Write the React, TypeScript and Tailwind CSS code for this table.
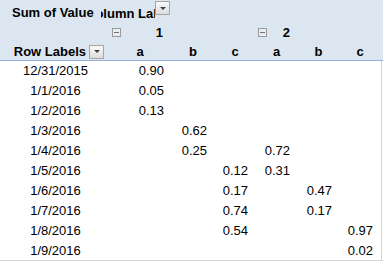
import React from 'react'

// pivot table: 1 / 2 grouped columns with a b c under each
const rows: [string, (string | null)[]][] = [
  ['12/31/2015', ['0.90', null, null, null, null, null]],
  ['1/1/2016', ['0.05', null, null, null, null, null]],
  ['1/2/2016', ['0.13', null, null, null, null, null]],
  ['1/3/2016', [null, '0.62', null, null, null, null]],
  ['1/4/2016', [null, '0.25', null, '0.72', null, null]],
  ['1/5/2016', [null, null, '0.12', '0.31', null, null]],
  ['1/6/2016', [null, null, '0.17', null, '0.47', null]],
  ['1/7/2016', [null, null, '0.74', null, '0.17', null]],
  ['1/8/2016', [null, null, '0.54', null, null, '0.97']],
  ['1/9/2016', [null, null, null, null, null, '0.02']],
]

const cols = 'grid grid-cols-[104px_63px_43px_41px_42px_42px_41px_7px]'

function DropBtn() {
  return (
    <div className="w-[15px] h-[14px] border border-[#a6a6a6] bg-gradient-to-b from-[#fafafa] to-[#dcdcdc] flex items-center justify-center">
      <div className="w-0 h-0 border-l-[3px] border-r-[3px] border-t-[3px] border-l-transparent border-r-transparent border-t-[#404040]" />
    </div>
  )
}

function Minus() {
  return (
    <div className="w-[9px] h-[9px] border border-[#9a9a9a] bg-[#e8eef6] flex items-center justify-center">
      <div className="w-[5px] h-px bg-[#707070]" />
    </div>
  )
}

export default function App() {
  return (
    <div className="w-[383px] h-[261px] overflow-hidden bg-white text-black text-[13px]" style={{ fontFamily: '"Liberation Sans", Arial, sans-serif' }}>
      {/* header */}
      <div className="bg-[#dce6f1] border-b border-[#95b3d7] font-bold">
        <div className={cols + ' h-[20px] items-center'}>
          <div className="pl-[12px] pt-[3px] whitespace-nowrap">Sum of Value</div>
          <div className="relative h-full col-span-2">
            <div className="absolute left-[-3px] top-0 w-[54px] h-full overflow-hidden">
              <div className="absolute left-[-15px] top-[4px] whitespace-nowrap">Column Labels</div>
            </div>
            <div className="absolute left-[51px] top-[1px]"><DropBtn /></div>
          </div>
        </div>
        <div className={cols + ' h-[20px] items-center pt-[3px]'}>
          <div />
          <div className="flex items-center justify-between pl-[8px] pr-[4px]"><Minus /><span>1</span></div>
          <div />
          <div />
          <div className="flex items-center justify-between pl-[7px] pr-[3px]"><Minus /><span>2</span></div>
        </div>
        <div className={cols + ' h-[20px] items-center pt-[2px]'}>
          <div className="flex items-center justify-end gap-[3px]"><span>Row Labels</span><DropBtn /></div>
          {['a', 'b', 'c', 'a', 'b', 'c'].map((h, i) => (
            <div key={i} className="text-center pl-[9px]">{h}</div>
          ))}
        </div>
      </div>
      {/* body */}
      <div className="border-b border-[#d4d4d4]">
        {rows.map(([label, vals], r) => (
          <div key={r} className={cols + (r === rows.length - 1 ? ' h-[19px]' : ' h-[20px]') + ' items-center'}>
            <div className="text-center pl-[7px]">{label}</div>
            {vals.map((v, i) => (
              <div key={i} className="text-right pr-[3px]">{v}</div>
            ))}
            <div className="h-full border-r border-[#d4d4d4] w-[6px]" />
          </div>
        ))}
      </div>
    </div>
  )
}
